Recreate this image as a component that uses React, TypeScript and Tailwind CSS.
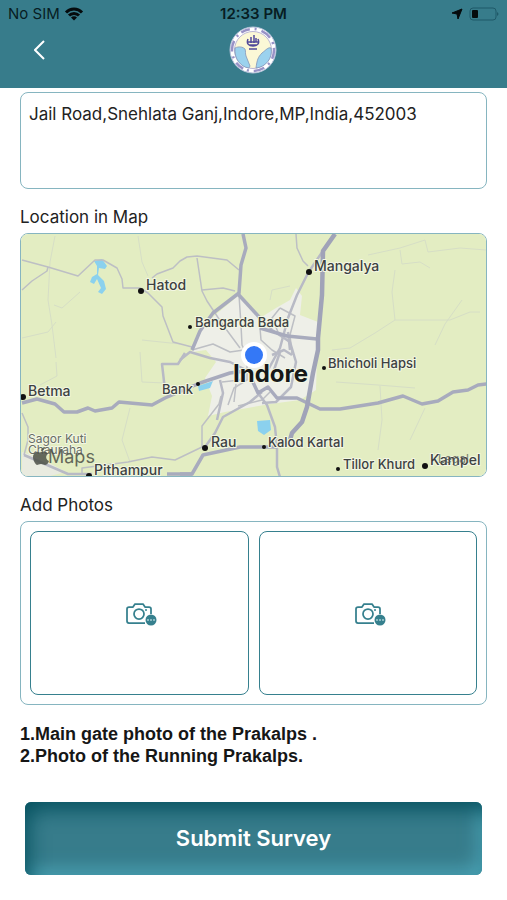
import { useState } from "react";

const minorRoads = [
  "M22 260 48 267 78 276 95 260 103 260 117 268 122 279 123 288 140 288 148 293 162 307 163 316 173 342 192 347",
  "M48 267 47 271 32 281 22 290",
  "M152 278 157 274 173 268 180 261 187 257 197 256 227 260 239 270",
  "M197 258 202 291 207 301 223 325 240 348",
  "M202 290 223 288 235 291",
  "M296 234 297 248 303 261 308 266",
  "M22 413 28 427 28 440 24 455",
  "M82 474 82 468 128 462 152 457 175 460 202 447",
  "M239 295 241 325 242 345 250 362",
  "M202 447 202 426 219 404 221 396",
  "M260 328 261 340 272 350 285 358",
  "M280 308 295 316 290 335 292 355",
  "M280 308 272 318 278 332",
  "M222 382 240 380 248 368",
  "M244 350 230 352 213 344 192 350",
  "M228 405 234 388 247 380 247 364",
  "M234 402 236 384",
  "M238 406 262 400 270 392",
];

const faintRoads = [
  "M55 236 50 262 48 300 52 325 56 358",
  "M54 305 62 308 80 292",
  "M138 236 142 262 148 276",
  "M22 338 48 332 56 322",
  "M142 340 180 344",
  "M56 362 57 376 40 385",
  "M368 255 400 248 425 240 428 252 460 248 486 250",
  "M400 250 402 264 420 262 430 268",
  "M395 270 392 292 395 320 375 333 350 348 332 350",
  "M395 320 450 320 470 312 480 312",
  "M462 300 445 324 435 345",
  "M336 382 378 385 415 388",
  "M380 386 382 420 378 450",
  "M425 408 410 440",
  "M140 352 142 382 165 383",
  "M130 408 122 440 130 462",
  "M270 300 272 290 290 286",
];

const mediumRoads = [
  "M180 360 190 352 210 358 230 362 250 372",
  "M258 393 267 405 275 427 277 447 277 467 280 477",
  "M262 392 250 402 223 417 215 433 205 447",
  "M220 380 223 393 217 420",
  "M260 318 272 330 290 342 296 362 291 387 276 402 262 403",
  "M333 236 308 273 297 295 288 318 280 348 268 370",
  "M24 455 68 474 92 474",
  "M272 355 284 350 292 355",
  "M274 370 280 352",
  "M288 332 290 350",
  "M165 390 162 364 178 364 185 353",
];

const majorRoads = [
  "M243 234 246 248 241 265 239 293 213 313 200 331 192 350",
  "M238 294 260 318",
  "M260 328 287 336 317 339",
  "M22 403 37 399 55 404 64 412 77 412 88 408 95 411 112 408 119 402 152 405 165 398 200 383 230 373 245 371",
  "M252 380 258 393 268 387 277 398 297 398 320 409 340 409 378 403 403 396 422 404 438 401 453 392 468 390 478 385 487 384",
  "M180 474 192 474 203 455 240 447 277 447",
  "M167 474 192 474",
];

const towns = [
  { name: "Hatod", x: 146, y: 290, dot: [141, 291], size: 14, r: 3 },
  { name: "Mangalya", x: 314, y: 271, dot: [309, 272], size: 14, r: 3 },
  { name: "Bangarda Bada", x: 195, y: 327, dot: [190, 327], size: 13, r: 2 },
  { name: "Bhicholi Hapsi", x: 328, y: 368, dot: [324, 368], size: 13, r: 2 },
  { name: "Betma", x: 28, y: 396, dot: [23, 397], size: 14, r: 3 },
  { name: "Bank", x: 162, y: 394, dot: [198, 384], size: 13, r: 2 },
  { name: "Rau", x: 211, y: 447, dot: [205, 448], size: 14, r: 3 },
  { name: "Kalod Kartal", x: 268, y: 447, dot: [264, 447], size: 13, r: 2 },
  { name: "Pithampur", x: 94, y: 475, dot: [89, 476], size: 14, r: 3 },
  { name: "Tillor Khurd", x: 343, y: 469, dot: [338, 469], size: 13, r: 2 },
  { name: "Kampel", x: 430, y: 465, dot: [425, 466], size: 14, r: 3 },
];

function AreaMap() {
  return (
    <svg
      viewBox="21 234 465 242"
      preserveAspectRatio="xMidYMid slice"
      className="block h-full w-full"
      role="img"
      aria-label="Map of Indore"
      fontFamily='Inter, "Noto Sans", sans-serif'
    >
      <rect x="0" y="200" width="520" height="300" fill="#e3edc2" />
      <path
        d="M238 296 246 304 260 318 276 308 290 300 296 288 302 296 300 315 318 322 316 390 300 400 270 404 225 412 208 416 212 396 205 378 216 362 206 350 192 352 196 336 214 316Z"
        fill="#eeefe8"
      />
      <path d="M22 452 40 458 66 472 50 476 22 476Z" fill="#e9ebe0" />
      <g fill="#8bd1ee">
        <path d="M94 261 102 259 107 266 105 269 99 268 98 275 104 281 106 289 102 294 98 292 101 288 97 279 94 284 90 282 92 277 97 274 97 266Z" />
        <path d="M257 421 270 420 271 430 264 435 258 431Z" />
        <path d="M198 386 213 381 210 388 199 391Z" />
      </g>
      <g fill="none" strokeLinejoin="round">
        <g stroke="#d6dec6" strokeWidth="1">
          {faintRoads.map((d) => <path key={d} d={d} />)}
        </g>
        <g stroke="#bdbfc4" strokeWidth="1.5">
          {minorRoads.map((d) => <path key={d} d={d} />)}
        </g>
        <g stroke="#b8bac5" strokeWidth="2.5">
          {mediumRoads.map((d) => <path key={d} d={d} />)}
        </g>
        <g stroke="#a8abbd" strokeWidth="3.5">
          {majorRoads.map((d) => <path key={d} d={d} />)}
        </g>
        <path
          d="M335 234 323 251 322 295 318 338 318 350 313 373 307 407 302 422 292 433 290 440"
          stroke="#a0a3b8"
          strokeWidth="4.5"
        />
      </g>
      <g fill="#3d4141" stroke="#f3f7e4" strokeWidth="2" paintOrder="stroke" strokeLinejoin="round">
        <text x="28" y="443" fontSize="12" fill="#686e65">Sagor Kuti</text>
        <text x="28" y="454" fontSize="12" fill="#686e65">Chauraha</text>
        {towns.map((t) => (
          <g key={t.name}>
            <circle cx={t.dot[0]} cy={t.dot[1]} r={t.r} fill="#111" stroke="none" />
            <text x={t.x} y={t.y} fontSize={t.size} fontWeight="500">{t.name}</text>
          </g>
        ))}
        <text x="233" y="382" fontSize="24" fontWeight="700" fill="#161818">Indore</text>
      </g>
      <text x="438" y="463" fontSize="12" fill="#5d6258" opacity="0.8">Legal</text>
      <g fill="#4d5148" opacity="0.85">
        <path d="M41 452c2-1 6-1 7 2-3 2-2 6 1 7-1 3-3 4-4 4s-2-1-4-1-3 1-4 1c-2-1-4-5-4-8s3-6 5-5c1 0 2 1 3 0Z" />
        <path d="M41 451c0-2 2-4 4-4 0 2-2 4-4 4Z" />
        <text x="48" y="463" fontSize="18">Maps</text>
      </g>
      <circle cx="254" cy="355" r="13" fill="#fff" />
      <circle cx="254" cy="355" r="9" fill="#3478f6" />
    </svg>
  );
}

function Emblem() {
  return (
    <svg viewBox="0 0 48 48" className="size-12" role="img" aria-label="Organisation emblem">
      <circle cx="24" cy="24" r="23" fill="#fff" stroke="#b9c4dc" />
      <circle cx="24" cy="24" r="21" fill="none" stroke="#6c64ae" strokeWidth="2.5" strokeDasharray="9 5 2 5 11 5 2 4" opacity="0.7" />
      <circle cx="24" cy="24" r="18.5" fill="#fbf8d6" stroke="#a9a5ce" strokeWidth="0.8" />
      <path d="M6 22c4-2 8-1 10 1 1 3 0 4 1 7l4 10-1 2C11 41 5 32 6 22Z" fill="#9bd2ee" stroke="#8395b8" strokeWidth="0.8" />
      <path d="M42 22c-3-1-5 2-9 5-4 4-5 7-6 15 10-1 17-10 15-20Z" fill="#9bd2ee" stroke="#8395b8" strokeWidth="0.8" />
      <g fill="none" stroke="#51499a" strokeWidth="1.5">
        <path d="M19 13c-2 5 1 7 5 7s7-2 5-7M22 11v6M25 9v8M27 12v4M18 16h12M20 19h8M20 23h8" />
      </g>
    </svg>
  );
}

function CameraIcon() {
  return (
    <svg viewBox="0 0 32 26" className="mt-1 ml-1 h-[26px] w-8" fill="none" stroke="#36808e" strokeWidth="1.75" aria-hidden="true">
      <path d="M20 21H4a2 2 0 0 1-2-2V7a2 2 0 0 1 2-2h4l2-3h8l2 3h4a2 2 0 0 1 2 2v5" strokeLinejoin="round" />
      <circle cx="14" cy="12" r="5" />
      <circle cx="21" cy="8" r="1" fill="#36808e" stroke="none" />
      <circle cx="26" cy="18" r="5.5" fill="#36808e" stroke="none" />
      <path d="M22 18h8" stroke="#a5cbd2" strokeWidth="1.5" strokeDasharray="2 1" />
    </svg>
  );
}

function PhotoSlot({ label }: { label: string }) {
  return (
    <button
      type="button"
      aria-label={label}
      className="flex h-41 items-center justify-center rounded-lg border border-[#36808e] bg-white"
    >
      <CameraIcon />
    </button>
  );
}

export default function App() {
  const [address, setAddress] = useState("Jail Road,Snehlata Ganj,Indore,MP,India,452003");
  return (
    <div className="min-h-screen bg-white font-['Inter','Noto_Sans',sans-serif] text-[#222]">
      <header className="bg-[#377c8b] pb-3.5">
        <div className="grid h-7 grid-cols-3 items-center px-2 text-[15px] text-[#071d23]">
          <div className="flex items-center gap-1">
            <span>No SIM</span>
            <svg viewBox="0 0 20 15" className="h-4 w-5" fill="none" stroke="#050b0d" strokeWidth="3" aria-hidden="true">
              <path d="M2 6a11 11 0 0 1 16 0M5 9a7 7 0 0 1 10 0" />
              <path d="m7 11 3 3 3-3a4 4 0 0 0-6 0Z" fill="#050b0d" stroke="none" />
            </svg>
          </div>
          <div className="text-center font-semibold">12:33 PM</div>
          <div className="flex items-center justify-end gap-1.5">
            <svg viewBox="0 0 12 12" className="size-3" fill="#050b0d" aria-hidden="true">
              <path d="M11 1 7 11 6 6 1 5Z" stroke="#050b0d" strokeLinejoin="round" />
            </svg>
            <svg viewBox="0 0 30 14" className="h-3.5 w-[30px]" aria-hidden="true">
              <rect x="1" y="1" width="26" height="12" rx="3" fill="none" stroke="#1f5968" />
              <rect x="3" y="3" width="6" height="8" rx="1" fill="#050b0d" />
              <path d="M28 5q3 2 0 4Z" fill="#1f5968" />
            </svg>
          </div>
        </div>
        <div className="-mt-0.5 grid h-12 grid-cols-3 items-center px-7">
          <button type="button" aria-label="Back" className="flex size-6 items-center justify-center">
            <svg viewBox="0 0 12 20" className="h-5 w-3" fill="none" stroke="#fff" strokeWidth="2" aria-hidden="true">
              <path d="m10 1-9 9 9 9" />
            </svg>
          </button>
          <div className="flex justify-center">
            <Emblem />
          </div>
        </div>
      </header>

      <main className="px-5 pt-1">
        <textarea
          aria-label="Address"
          value={address}
          onChange={(e) => setAddress(e.target.value)}
          className="block h-[97px] w-full resize-none rounded-lg border border-[#86b5c0] bg-white p-2 text-[17px] leading-[26px] outline-none"
        />
        <h2 className="mt-4 text-[17px] leading-6">Location in Map</h2>
        <div className="mt-1 h-61 overflow-hidden rounded-lg border border-[#86b5c0]">
          <AreaMap />
        </div>
        <h2 className="mt-4 text-[17px] leading-6">Add Photos</h2>
        <div className="mt-1 grid grid-cols-2 gap-2.5 rounded-lg border border-[#86b5c0] p-[9px]">
          <PhotoSlot label="Add main gate photo" />
          <PhotoSlot label="Add running Prakalps photo" />
        </div>
        <p className="mt-4.5 font-['Liberation_Sans',Arial,sans-serif] text-lg leading-[22px] font-bold text-[#161616]">
          1.Main gate photo of the Prakalps .
          <br />
          2.Photo of the Running Prakalps.
        </p>
        <div className="px-[5px] pt-[35px] pb-5">
          <button
            type="button"
            className="h-[73px] w-full rounded-md bg-[#377c8b] text-[22px] font-semibold text-white shadow-[inset_8px_12px_20px_-4px_#085361,inset_-8px_-10px_18px_-4px_#4ba3b5]"
          >
            Submit Survey
          </button>
        </div>
      </main>
    </div>
  );
}
